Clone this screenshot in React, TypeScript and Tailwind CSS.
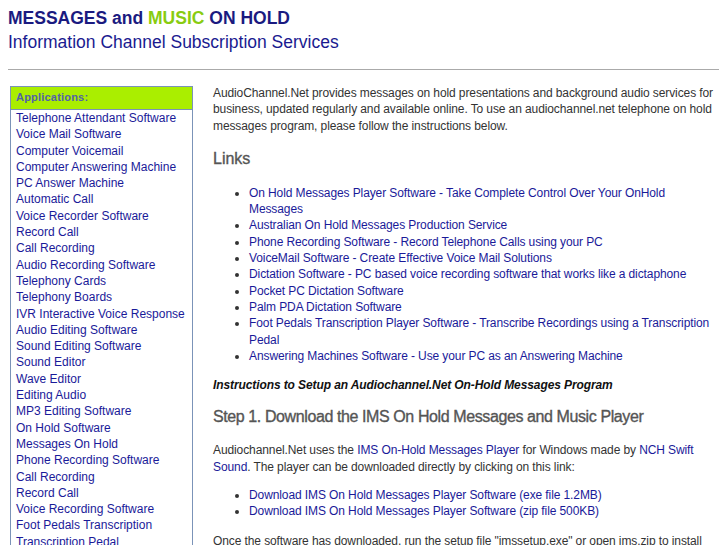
import React from 'react';

const sideLinks = [
  'Telephone Attendant Software',
  'Voice Mail Software',
  'Computer Voicemail',
  'Computer Answering Machine',
  'PC Answer Machine',
  'Automatic Call',
  'Voice Recorder Software',
  'Record Call',
  'Call Recording',
  'Audio Recording Software',
  'Telephony Cards',
  'Telephony Boards',
  'IVR Interactive Voice Response',
  'Audio Editing Software',
  'Sound Editing Software',
  'Sound Editor',
  'Wave Editor',
  'Editing Audio',
  'MP3 Editing Software',
  'On Hold Software',
  'Messages On Hold',
  'Phone Recording Software',
  'Call Recording',
  'Record Call',
  'Voice Recording Software',
  'Foot Pedals Transcription',
  'Transcription Pedal',
  'Dictation Software',
];

const mainLinks = [
  'On Hold Messages Player Software - Take Complete Control Over Your OnHold Messages',
  'Australian On Hold Messages Production Service',
  'Phone Recording Software - Record Telephone Calls using your PC',
  'VoiceMail Software - Create Effective Voice Mail Solutions',
  'Dictation Software - PC based voice recording software that works like a dictaphone',
  'Pocket PC Dictation Software',
  'Palm PDA Dictation Software',
  'Foot Pedals Transcription Player Software - Transcribe Recordings using a Transcription Pedal',
  'Answering Machines Software - Use your PC as an Answering Machine',
];

const downloads = [
  'Download IMS On Hold Messages Player Software (exe file 1.2MB)',
  'Download IMS On Hold Messages Player Software (zip file 500KB)',
];

export default function App() {
  return (
    <div className="h-[545px] overflow-hidden bg-white px-2 pt-[8px] font-['Liberation_Sans',Arial,sans-serif] text-[12px] leading-[16.3px] text-[#333]">
      {/* Header */}
      <div className="pb-[16px]">
        <h1 className="text-[17.5px] font-bold leading-[21px] text-[#1a1a80]">
          MESSAGES and <span className="text-[#88cc11]">MUSIC</span> ON HOLD
        </h1>
        <p className="mt-[3px] text-[17.5px] leading-[21px] text-[#1a1a90]">
          Information Channel Subscription Services
        </p>
      </div>
      <div className="border-t border-[#aaa]" />

      <div className="mt-[15px] flex items-start gap-[20px]">
        {/* Sidebar */}
        <div className="ml-[2px] mt-[1px] w-[183px] shrink-0 border border-[#7b93b8]">
          <div className="border-b border-[#7b93b8] bg-[#aaee00] px-[5px] pb-[5px] pt-[4px] text-[11px] font-bold leading-[13px] tracking-[0.2px] text-[#5262a8]">
            Applications:
          </div>
          <ul className="px-[5px]">
            {sideLinks.map((l, i) => (
              <li key={i}>
                <a href="#" className="text-[#1a1a99]">
                  {l}
                </a>
              </li>
            ))}
          </ul>
        </div>

        {/* Main content */}
        <div className="min-w-0 flex-1 tracking-[-0.1px]">
          <p>
            AudioChannel.Net provides messages on hold presentations and background audio services for
            business, updated regularly and available online. To use an audiochannel.net telephone on hold
            messages program, please follow the instructions below.
          </p>

          <h2 className="mt-[15px] text-[16px] leading-[20px] tracking-normal text-[#555] [-webkit-text-stroke:0.35px_#555]">
            Links
          </h2>

          <ul className="mt-[16px] list-disc pl-[36px]">
            {mainLinks.map((l, i) => (
              <li key={i}>
                <a href="#" className="text-[#1a1a99]">
                  {l}
                </a>
              </li>
            ))}
          </ul>

          <p className="mt-[13px] font-bold italic text-[#111]">
            Instructions to Setup an Audiochannel.Net On-Hold Messages Program
          </p>

          <h2 className="mt-[14px] text-[16px] leading-[20px] tracking-[-0.4px] text-[#555] [-webkit-text-stroke:0.35px_#555]">
            Step 1. Download the IMS On Hold Messages and Music Player
          </h2>

          <p className="mt-[15px]">
            Audiochannel.Net uses the{' '}
            <a href="#" className="text-[#1a1a99]">
              IMS On-Hold Messages Player
            </a>{' '}
            for Windows made by{' '}
            <a href="#" className="text-[#1a1a99]">
              NCH Swift Sound
            </a>
            . The player can be downloaded directly by clicking on this link:
          </p>

          <ul className="mt-[12px] list-disc pl-[36px]">
            {downloads.map((l, i) => (
              <li key={i}>
                <a href="#" className="text-[#1a1a99]">
                  {l}
                </a>
              </li>
            ))}
          </ul>

          <p className="mt-[13px]">
            Once the software has downloaded, run the setup file "imssetup.exe" or open ims.zip to install
            the software.
          </p>
        </div>
      </div>
    </div>
  );
}
